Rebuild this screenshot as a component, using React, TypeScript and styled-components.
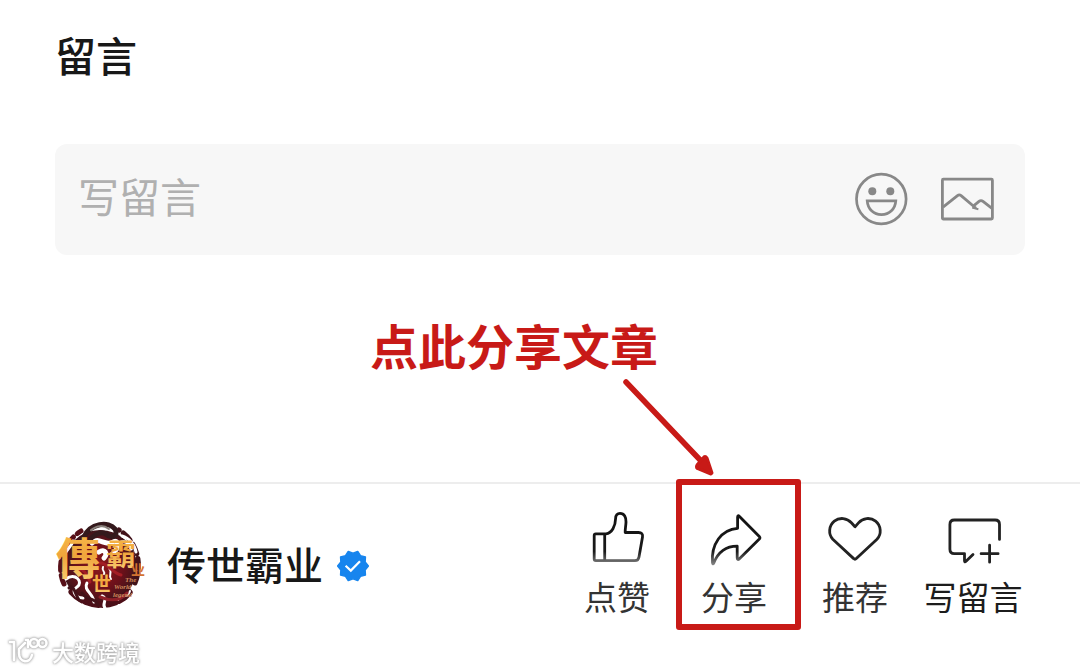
import React from 'react';
import styled, { createGlobalStyle } from 'styled-components';

const GlobalStyle = createGlobalStyle`
  *, *::before, *::after { box-sizing: border-box; }
  body {
    margin: 0;
    background: #fff;
    color: #181818;
    font-family: "Noto Sans CJK SC", "Noto Sans", sans-serif;
  }
  button, input { font: inherit; color: inherit; }
`;

const RED = '#c81a17';

const Page = styled.div`
  position: relative;
  display: flex;
  flex-direction: column;
  min-height: 100vh;
  overflow: hidden;
`;

const Comments = styled.main`
  flex: 1;
  display: flex;
  flex-direction: column;
  gap: 60px;
  padding: 24px 55px 0;
`;

const Heading = styled.h1`
  margin: 0;
  font-size: 41px;
  line-height: 60px;
  font-weight: 500;
`;

const Field = styled.form`
  display: flex;
  align-items: center;
  gap: 32px;
  height: 111px;
  padding: 0 31px 2px 23px;
  border-radius: 12px;
  background: #f7f7f7;
`;

const FieldInput = styled.input`
  flex: 1;
  min-width: 0;
  padding: 0 0 8px;
  border: 0;
  outline: 0;
  background: none;
  font-size: 41px;
  line-height: 60px;
  &::placeholder { color: #b0b0b0; opacity: 1; }
`;

const IconButton = styled.button`
  display: flex;
  padding: 0;
  border: 0;
  background: none;
  color: #888;
  cursor: pointer;
`;

const Footer = styled.footer`
  display: flex;
  align-items: flex-start;
  justify-content: space-between;
  height: 190px;
  padding: 27px 51px 0 55px;
  border-top: 2px solid #ededed;
`;

const Account = styled.a`
  display: flex;
  align-items: center;
  padding-top: 10px;
  color: inherit;
  text-decoration: none;
`;

const AccountName = styled.span`
  margin: 0 13px 0 21px;
  padding-bottom: 6px;
  font-size: 39px;
  line-height: 60px;
  font-weight: 500;
`;

const Actions = styled.nav`
  display: grid;
  grid-template-columns: 116px 118px 124px 112px;
`;

const ActionCell = styled.div`
  position: relative;
  display: flex;
  justify-content: center;
`;

const ActionButton = styled.button<{ $strong?: boolean }>`
  display: flex;
  flex-direction: column;
  align-items: center;
  padding: 0;
  border: 0;
  background: none;
  color: ${(p) => (p.$strong ? '#1c1c1c' : '#333')};
  font-size: 33px;
  line-height: 50px;
  white-space: nowrap;
  cursor: pointer;
`;

const Highlight = styled.div`
  position: absolute;
  top: -32px;
  left: 1px;
  width: 125px;
  height: 151px;
  border: 6px solid ${RED};
  border-radius: 3px;
  pointer-events: none;
`;

const Callout = styled.div`
  position: absolute;
  right: 135px;
  bottom: 100%;
  margin-bottom: 131px;
  color: ${RED};
  font-size: 48px;
  line-height: 72px;
  font-weight: 700;
  white-space: nowrap;
  pointer-events: none;
`;

const Arrow = styled.svg`
  position: absolute;
  right: 78px;
  bottom: 100%;
  margin-bottom: 35px;
  pointer-events: none;
`;

const Watermark = styled.div`
  position: absolute;
  left: 6px;
  bottom: 5px;
  display: flex;
  align-items: center;
  gap: 4px;
  color: #fff;
  font-size: 22px;
  line-height: 32px;
  font-weight: 500;
  filter: drop-shadow(0 0 1px #aaa) drop-shadow(0 0 1px #bbb);
`;

const SmileIcon = () => (
  <svg width="54" height="54" viewBox="0 0 54 54" fill="none" stroke="currentColor" strokeWidth="2.7" aria-hidden="true">
    <circle cx="27.3" cy="27" r="24.8" />
    <circle cx="18.3" cy="19.3" r="4" fill="currentColor" stroke="none" />
    <circle cx="36.3" cy="19.3" r="4" fill="currentColor" stroke="none" />
    <path d="M13.2 28.9H41.8C41.2 37 35.5 42.6 27.5 42.6S13.8 37 13.2 28.9Z" />
  </svg>
);

const PictureIcon = () => (
  <svg width="54" height="54" viewBox="0 0 54 54" fill="none" stroke="currentColor" strokeWidth="2.8" strokeLinejoin="round" aria-hidden="true">
    <rect x="2.4" y="7.2" width="50" height="39.8" rx="1" />
    <path d="M3 35.2 17.5 23.6Q19.3 22.2 21.1 23.6L36 36.2M32.4 34.8 39 29.4Q41 27.8 43 29.4L52 36.4" />
    <path d="M32.2 35.6 38.4 37.2" strokeWidth="2" />
  </svg>
);

const ActionSvg = ({ children, fade }: { children: React.ReactNode; fade?: string }) => (
  <svg width="60" height="60" viewBox="0 0 60 60" fill="none" stroke={fade ? `url(#${fade})` : '#222'} strokeWidth="2.8" strokeLinecap="round" strokeLinejoin="round" aria-hidden="true">
    {fade && (
      <defs>
        <linearGradient id={fade} gradientUnits="userSpaceOnUse" x1="0" y1="0" x2="0" y2="54">
          <stop offset="0" stopColor="#111" />
          <stop offset="0.75" stopColor="#1a1a1a" />
          <stop offset="1" stopColor="#888" />
        </linearGradient>
      </defs>
    )}
    {children}
  </svg>
);

const LikeIcon = () => (
  <ActionSvg fade="like-fade">
    <path d="M8.8 22.8H19C25 22.3 28.4 15 28.6 7.5C28.6 4 30.3 2.4 33 2.4C37.4 2.4 39.2 6.5 39 11C38.9 15 38 18 38.2 21.5H51.5C54.6 21.5 56 23 55.5 26L52 46C51.5 48.7 50.5 49.7 48 49.7H8.8Q7.2 49.7 7.2 48.1V24.4Q7.2 22.8 8.8 22.8ZM17.7 23V49.7" />
  </ActionSvg>
);

const ShareIcon = () => (
  <ActionSvg fade="share-fade">
    <path d="M33.6 17.3V6.2Q33.6 3.6 35.5 5.4L55.3 25.4Q56.5 26.7 55.3 28L35.2 48Q33.2 49.4 33.2 46.8V35.2C22.3 35.2 14.2 41 9.7 52.2Q8.8 53.6 8.5 51.8C7 33.5 17.2 18.3 33.6 17.3Z" />
  </ActionSvg>
);

const HeartIcon = () => (
  <ActionSvg>
    <path d="M30 15.8 26.4 11.8C22 6.8 14.6 6 9.3 10.2C3.6 14.9 3.2 23.1 7.8 28.2L28.7 47.6Q30 48.9 31.3 47.6L52 28.2C56.7 23.1 56.3 14.9 50.6 10.2C45.3 6 37.9 6.8 33.5 11.8Z" />
  </ActionSvg>
);

const CommentIcon = () => (
  <ActionSvg>
    <path d="M56.5 28.4V13.4Q56.5 9 52.1 9H11.3Q6.9 9 6.9 13.4V38.2Q6.9 42.6 11.3 42.6H21.5V49.7Q21.5 51.8 23 50.3L30 43.4M46.6 34.2V51.2M38.1 42.7H55.1" />
  </ActionSvg>
);

const badgePoints = Array.from({ length: 20 }, (_, i) => {
  const angle = (i * Math.PI) / 10;
  const radius = i % 2 ? 15.4 : 12.8;
  return `${(17 + radius * Math.sin(angle)).toFixed(2)},${(17 - radius * Math.cos(angle)).toFixed(2)}`;
}).join(' ');

const VerifiedBadge = () => (
  <svg width="34" height="34" viewBox="0 0 34 34" role="img" aria-label="已认证">
    <polygon points={badgePoints} fill="#1785ee" stroke="#1785ee" strokeWidth="1.4" strokeLinejoin="round" />
    <path d="M9.6 16.8 14.8 21.6 24 12.2" fill="none" stroke="#fff" strokeWidth="2.2" />
  </svg>
);

const Emblem = () => (
  <svg width="91" height="90" viewBox="0 0 91 90" aria-hidden="true">
    <defs>
      <linearGradient id="gold" x1="0" y1="0" x2="0" y2="1">
        <stop offset="0" stopColor="#f9c04e" />
        <stop offset="0.5" stopColor="#f0a53c" />
        <stop offset="1" stopColor="#fbd47c" />
      </linearGradient>
      <radialGradient id="ember">
        <stop offset="0" stopColor="#8a1a1c" />
        <stop offset="0.6" stopColor="#6d101a" />
        <stop offset="1" stopColor="#40151a" />
      </radialGradient>
    </defs>
    <circle cx="45" cy="46" r="37" fill="url(#ember)" />
    <g fill="none" strokeLinecap="round">
      <path d="M9 63C1 46 7 22 26 10" stroke="#571018" strokeWidth="5" strokeDasharray="9 5" />
      <path d="M80 62C88 43 82 20 64 9" stroke="#42131a" strokeWidth="5" strokeDasharray="10 5" />
      <path d="M17 71C31 87 62 89 76 69" stroke="#4c0f18" strokeWidth="7" strokeDasharray="13 4" />
      <path d="M37 22C44 15 50 26 58 21C63 18 65 26 59 31M44 31C50 27 53 33 49 37" stroke="#fff" strokeWidth="5" />
      <path d="M29 16C35 2 54 0 60 8C64 16 56 18 51 13C45 9 38 15 33 20C29 23 26 22 29 16Z" stroke="#34191c" strokeWidth="5" />
      <path d="M36 9C42 4 49 4 54 8" stroke="#8a827c" strokeWidth="2" />
      <path d="M67 15C74 17 80 24 81 31M64 22C70 19 75 22 76 28M9 35C11 28 16 27 18 20" stroke="#fff" strokeWidth="3" />
      <path d="M11 58C20 51 29 61 22 66C16 69 20 77 28 77M32 62C28 69 38 72 39 81M47 75C54 78 46 83 50 87" stroke="#fff" strokeWidth="3" />
      <path d="M63 79C66 73 73 78 75 70M54 47C58 51 53 54 56 58M48 46C46 50 51 51 49 53" stroke="#fff" strokeWidth="2" />
      <path d="M14 67C19 63 20 73 24 79M27 72C32 80 40 76 43 84" stroke="#431219" strokeWidth="3" />
      <path d="M21 49C28 46 33 54 35 61M45 42C53 42 57 52 66 54" stroke="#a31d25" strokeWidth="3" />
      <path d="M45 76C60 82 68 77 72 72" stroke="#8e2028" strokeWidth="3" />
    </g>
    <g fill="url(#gold)" fontFamily="Noto Sans CJK TC, sans-serif" fontWeight="700">
      <text x="1" y="54" fontSize="44">傳</text>
      <text x="51" y="44" fontSize="30">霸</text>
      <text x="37" y="70" fontSize="19">世</text>
      <text x="76" y="54" fontSize="14" fill="#d47331">业</text>
    </g>
    <g fill="#d08a5c" fontFamily="Liberation Serif, serif" fontStyle="italic" fontWeight="700">
      <text x="70" y="61" fontSize="7">The</text>
      <text x="59" y="68" fontSize="7">World</text>
      <text x="58" y="76" fontSize="7">legend</text>
    </g>
  </svg>
);

const WatermarkLogo = () => (
  <svg width="42" height="32" viewBox="0 0 42 32" fill="none" stroke="#fff" strokeWidth="2.6" strokeLinecap="round" strokeLinejoin="round" aria-hidden="true">
    <path d="M4 7H8V25M19 8 13 14V18C13 28 24 29 26 20M20 5H22V12" />
    <circle cx="28" cy="8" r="4" />
    <circle cx="36.5" cy="8" r="4" />
  </svg>
);

export default function App() {
  return (
    <Page>
      <GlobalStyle />
      <Comments>
        <Heading>留言</Heading>
        <Field onSubmit={(e) => e.preventDefault()}>
          <FieldInput type="text" placeholder="写留言" aria-label="写留言" />
          <IconButton type="button" aria-label="表情"><SmileIcon /></IconButton>
          <IconButton type="button" aria-label="图片"><PictureIcon /></IconButton>
        </Field>
      </Comments>
      <Footer>
        <Account href="#account">
          <Emblem />
          <AccountName>传世霸业</AccountName>
          <VerifiedBadge />
        </Account>
        <Actions>
          <ActionCell>
            <ActionButton type="button"><LikeIcon />点赞</ActionButton>
          </ActionCell>
          <ActionCell>
            <ActionButton type="button"><ShareIcon />分享</ActionButton>
            <Highlight />
            <Callout>点此分享文章</Callout>
            <Arrow width="94" height="100" viewBox="0 0 94 100" aria-hidden="true">
              <path d="M5 6 82 87" stroke={RED} strokeWidth="5.5" strokeLinecap="round" />
              <path d="M91 97 86 82Q84 79 82 82L76 89Q74 92 78 93L90 98Z" fill={RED} stroke={RED} strokeWidth="3" strokeLinejoin="round" />
            </Arrow>
          </ActionCell>
          <ActionCell>
            <ActionButton type="button"><HeartIcon />推荐</ActionButton>
          </ActionCell>
          <ActionCell>
            <ActionButton type="button" $strong><CommentIcon />写留言</ActionButton>
          </ActionCell>
        </Actions>
      </Footer>
      <Watermark><WatermarkLogo />大数跨境</Watermark>
    </Page>
  );
}
